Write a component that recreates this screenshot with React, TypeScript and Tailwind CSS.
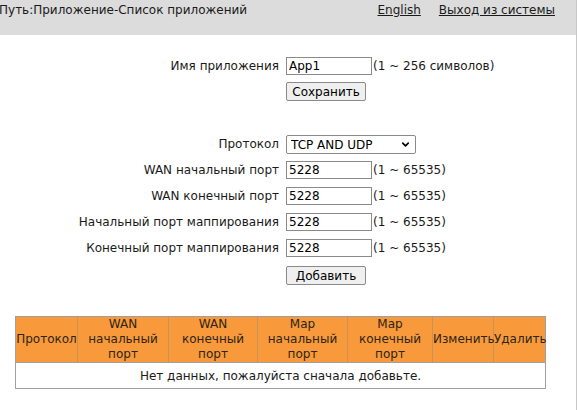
import { ChevronDown } from "lucide-react";

const font = { fontFamily: '"DejaVu Sans", Verdana, sans-serif' };

function Field({ label, value, hint }: { label: string; value: string; hint: string }) {
  return (
    <div className="flex h-[18px] items-center">
      <div className="w-[279px] text-right">{label}</div>
      <input
        readOnly
        value={value}
        className="ml-[7px] h-[18px] w-[86px] border border-[#8a8a8a] bg-white px-[2px] text-[12px] text-black outline-none"
        style={font}
      />
      <span className="ml-[1px]">{hint}</span>
    </div>
  );
}

function Btn({ children }: { children: string }) {
  return (
    <div className="flex">
      <div className="w-[286px]" />
      <button
        className="h-[19px] w-[80px] rounded-[2px] border border-[#8a8a8a] bg-[#efefef] text-[12px] leading-none text-black"
        style={font}
      >
        {children}
      </button>
    </div>
  );
}

const cols = [
  { w: "w-[62px]", t: ["Протокол"] },
  { w: "w-[91px]", t: ["WAN", "начальный", "порт"] },
  { w: "w-[89px]", t: ["WAN", "конечный", "порт"] },
  { w: "w-[90px]", t: ["Map", "начальный", "порт"] },
  { w: "w-[85px]", t: ["Map", "конечный", "порт"] },
  { w: "w-[61px]", t: ["Изменить"] },
  { w: "w-[52px]", t: ["Удалить"] },
];

export default function App() {
  return (
    <div
      className="h-[410px] w-[577px] border-r border-[#c8c8c8] bg-white text-[12px] text-[#1a1a1a]"
      style={font}
    >
      <div className="flex h-[35px] items-start bg-[#dcdcdc] pt-[1px]">
        <div className="ml-[-1px] flex-1">Путь:Приложение-Список приложений</div>
        <a className="mr-[18px] underline">English</a>
        <a className="mr-[21px] underline">Выход из системы</a>
      </div>

      <div className="mt-[22px] flex flex-col gap-[7px]">
        <Field label="Имя приложения" value="App1" hint="(1 ~ 256 символов)" />
        <Btn>Сохранить</Btn>
      </div>

      <div className="mt-[34px] flex flex-col gap-[8px]">
        <div className="flex h-[18px] items-center">
          <div className="w-[279px] text-right">Протокол</div>
          <div className="relative ml-[7px] h-[19px] w-[130px]">
            <select
              className="h-full w-full appearance-none rounded-[2px] border border-[#8a8a8a] bg-white pl-[4px] text-[12px] text-black outline-none"
              style={font}
              defaultValue="both"
            >
              <option value="both">TCP AND UDP</option>
            </select>
            <ChevronDown
              size={11}
              strokeWidth={3.5}
              className="pointer-events-none absolute top-[4px] right-[5px] text-black"
            />
          </div>
        </div>
        <Field label="WAN начальный порт" value="5228" hint="(1 ~ 65535)" />
        <Field label="WAN конечный порт" value="5228" hint="(1 ~ 65535)" />
        <Field label="Начальный порт маппирования" value="5228" hint="(1 ~ 65535)" />
        <Field label="Конечный порт маппирования" value="5228" hint="(1 ~ 65535)" />
        <div className="mt-[1px]">
          <Btn>Добавить</Btn>
        </div>
      </div>

      <table className="mt-[31px] ml-[15px] w-[530px] table-fixed border-collapse border border-[#a0a0a0]">
        <thead>
          <tr className="h-[46px] bg-[#f89a3b] text-[#2e2418]">
            {cols.map((c, i) => (
              <th
                key={i}
                className={`${c.w} border-r border-[#c99258] p-0 text-center font-normal leading-[15px] whitespace-nowrap last:border-r-0`}
              >
                {c.t.map((l) => (
                  <div key={l}>{l}</div>
                ))}
              </th>
            ))}
          </tr>
        </thead>
        <tbody>
          <tr className="h-[26px] border-t border-[#a0a0a0]">
            <td colSpan={7} className="text-center">
              Нет данных, пожалуйста сначала добавьте.
            </td>
          </tr>
        </tbody>
      </table>
    </div>
  );
}
